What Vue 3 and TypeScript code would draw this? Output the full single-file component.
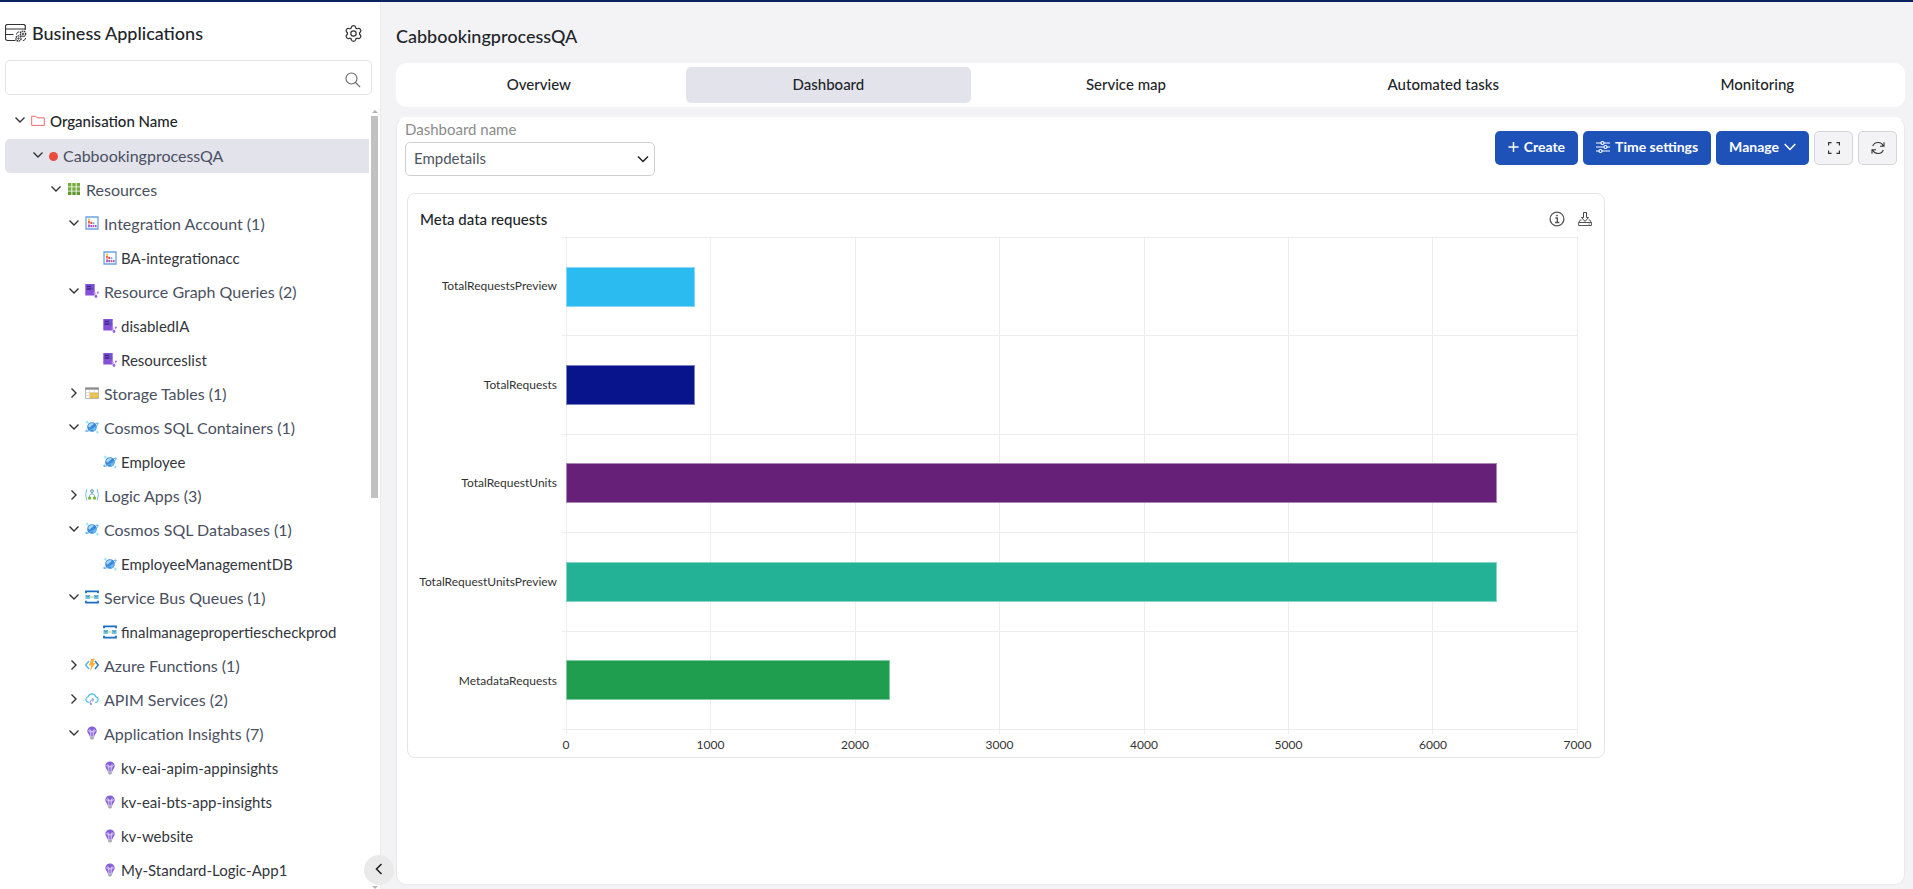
<script setup lang="ts">
import { ref } from 'vue'

interface TreeNode {
  label: string
  icon: string
  level: number
  kind: 'root' | 'app' | 'group' | 'leaf'
  open?: boolean
}

const group = (label: string, icon: string, open = true): TreeNode => ({ label, icon, level: 3, kind: 'group', open })
const leaf = (label: string, icon: string): TreeNode => ({ label, icon, level: 4, kind: 'leaf' })

const nodes: TreeNode[] = [
  { label: 'Organisation Name', icon: 'folder', level: 0, kind: 'root', open: true },
  { label: 'CabbookingprocessQA', icon: 'dot', level: 1, kind: 'app', open: true },
  { label: 'Resources', icon: 'resources', level: 2, kind: 'group', open: true },
  group('Integration Account (1)', 'integration'),
  leaf('BA-integrationacc', 'integration'),
  group('Resource Graph Queries (2)', 'query'),
  leaf('disabledIA', 'query'),
  leaf('Resourceslist', 'query'),
  group('Storage Tables (1)', 'table', false),
  group('Cosmos SQL Containers (1)', 'cosmos'),
  leaf('Employee', 'cosmos'),
  group('Logic Apps (3)', 'logic', false),
  group('Cosmos SQL Databases (1)', 'cosmos'),
  leaf('EmployeeManagementDB', 'cosmos'),
  group('Service Bus Queues (1)', 'bus'),
  leaf('finalmanagepropertiescheckprod', 'bus'),
  group('Azure Functions (1)', 'function', false),
  group('APIM Services (2)', 'apim', false),
  group('Application Insights (7)', 'insights'),
  leaf('kv-eai-apim-appinsights', 'insights'),
  leaf('kv-eai-bts-app-insights', 'insights'),
  leaf('kv-website', 'insights'),
  leaf('My-Standard-Logic-App1', 'insights'),
]

const tabs = ['Overview', 'Dashboard', 'Service map', 'Automated tasks', 'Monitoring']
const activeTab = ref('Dashboard')
const dashboard = ref('Empdetails')
const search = ref('')

const max = 7000
const ticks = [0, 1000, 2000, 3000, 4000, 5000, 6000, 7000]
const bars = [
  { name: 'TotalRequestsPreview', value: 890, fill: '#2cbbf0', edge: '#86d9f6' },
  { name: 'TotalRequests', value: 890, fill: '#08148c', edge: '#7a80c0' },
  { name: 'TotalRequestUnits', value: 6440, fill: '#662078', edge: '#ad84b7' },
  { name: 'TotalRequestUnitsPreview', value: 6440, fill: '#24b296', edge: '#86d4c5' },
  { name: 'MetadataRequests', value: 2240, fill: '#1f9e50', edge: '#85caa0' },
]
</script>

<template>
  <div class="page">
    <svg class="sprite" aria-hidden="true">
      <symbol id="i-folder" viewBox="0 0 14 14"><path d="M.7 11.4V2.3h4l1.3 1.5h7.3v7.6z" fill="none" stroke="#ee6a6e" /></symbol>
      <symbol id="i-dot" viewBox="0 0 9 14"><circle cx="4.5" cy="7.5" r="4.5" fill="#ea4a3e" /></symbol>
      <symbol id="i-resources" viewBox="0 0 14 14">
        <g fill="#74ad3d"><path d="M1 1h3.4v3.4H1zM5.3 1h3.4v3.4H5.3zM9.6 1H13v3.4H9.6z" /><path d="M1 5.3h3.4v3.4H1zM5.3 5.3h3.4v3.4H5.3zM9.6 5.3H13v3.4H9.6z" /></g>
        <path d="M1 9.6h3.4V13H1zM5.3 9.6h3.4V13H5.3zM9.6 9.6H13V13H9.6z" fill="#5f9630" />
      </symbol>
      <symbol id="i-integration" viewBox="0 0 14 14">
        <path d="M1 1h12v12H1z" fill="#fff" stroke="#6ba3e2" stroke-width="1.3" />
        <path d="M3 2.6h2v2.2H3z" fill="#fbc04e" /><path d="M3 5h2v2.4H3z" fill="#ef6a4a" /><path d="M3 8.6h2v2.6H3z" fill="#b45fc8" />
        <path d="M5.4 5.8h1.9V8H5.4z" fill="#e8453c" /><path d="M5.400 9h1.900v2.200H5.400z" fill="#8a55d8" /><path d="M7.800 6.400h1.600v1.800H7.800z" fill="#58a9ee" /><path d="M7.800 9h1.600v2.200H7.800z" fill="#e0568a" /><path d="M9.900 9h1.700v2.200H9.900z" fill="#9a5bd0" />
      </symbol>
      <symbol id="i-query" viewBox="0 0 14 14">
        <path d="M.3 0h9.400v11.500H.3z" fill="#8550d6" /><path d="M1.600 2.400h6.600M1.600 5h6.600" stroke="#41208a" stroke-width="1.500" /><path d="M6.500 2.400h1.100M6.500 5h1.100" stroke="#64d2f4" />
        <path d="M9.700 8.500 11 12.500l2-4" fill="none" stroke="#d5c2f4" /><circle cx="9.500" cy="9" r="1.100" fill="#b48af0" /><circle cx="12.900" cy="8.500" r="1.100" fill="#a774ee" /><circle cx="11" cy="12.500" r="1.400" fill="#9a62e6" />
      </symbol>
      <symbol id="i-table" viewBox="0 0 14 14">
        <path d="M.5 2h13v10.500H.5z" fill="#fff" stroke="#a3a3a3" stroke-width=".8" /><path d="M.2 1.500h13.600v2.200H.2z" fill="#8c8c8c" /><path d="M4.800 6.700h8.400v5.300H4.800z" fill="#efc02c" /><path d="M.5 6.500h13M.5 9.300h13M4.600 3.700v8.800M9 3.700v8.800" stroke="#d6cfb4" stroke-width=".7" />
      </symbol>
      <symbol id="i-cosmos" viewBox="0 0 14 14">
        <circle cx="7" cy="7" r="4.800" fill="#3a86d8" /><path d="M3.200 5.400c1-2.200 3.700-3.200 5.600-2C8 5.600 6 5 5.300 7.200 4.600 7.800 3 7 3.200 5.400z" fill="#a5daf9" /><path d="M7.200 9c1.300-1.300 3.200-1.600 4.200-1.500-.3 2-1.500 3.400-3 4z" fill="#6bb8ef" />
        <path d="M2.400 9.800c-2.600.9-2 2.600 1.400 1M10.800 3.600c3-1.300 3.200.2.300 2.700C9.200 8 6.500 9.600 4 10.600" fill="none" stroke="#5fb2ea" stroke-width="1.100" /><path d="M2.200.6v3M.7 2.100h3M12.300 10.600v3M10.800 12.100h3" stroke="#86e2f6" stroke-width=".9" />
      </symbol>
      <symbol id="i-logic" viewBox="0 0 14 14">
        <path d="M2 1.200C.9 1.200 1.600 6.300.4 6.800c1.200.5.5 5.600 1.600 5.600M12 1.200c1.100 0 .4 5.100 1.600 5.600-1.200.5-.5 5.600-1.600 5.600" fill="none" stroke="#76b6df" /><path d="M7 4.500v1.800M4.500 9V7.200L7 5.700l2.500 1.500V9" fill="none" stroke="#7bb3c9" />
        <circle cx="7" cy="3.100" r="1.400" fill="none" stroke="#478ec6" /><path d="M3.200 8.700h2.700v2.700H3.200zM8.200 8.700h2.700v2.700H8.200z" fill="#6eb52c" />
      </symbol>
      <symbol id="i-bus" viewBox="0 0 14 14">
        <path d="M1 3.300V1.300h12v2M1 10.700v2h12v-2" fill="none" stroke="#1b6cc4" stroke-width="1.800" /><path d="M.4 5h4.700v4H.4zM8.900 5h4.700v4H8.900z" fill="#74c3df" /><path d="m1 5.500 1.800 1.400 1.700-1.400M9.500 5.500l1.800 1.400L13 5.500" fill="none" stroke="#2f7fb8" stroke-width=".8" /><path d="M5.400 7h3.200" stroke="#a5c95a" />
      </symbol>
      <symbol id="i-function" viewBox="0 0 14 14">
        <path d="M4 3 .8 7 4 11" fill="none" stroke="#58b7e8" stroke-width="1.500" /><path d="m10 3 3.200 4L10 11" fill="none" stroke="#2f7cc8" stroke-width="1.500" /><path d="M6.500.8h3.300L8 5h2.600L5 13l1.400-5.400H3.800z" fill="#fbb034" />
      </symbol>
      <symbol id="i-apim" viewBox="0 0 14 14">
        <path d="M4 10.300H3.300A2.700 2.700 0 0 1 3 5a4 4 0 0 1 7.800-.2 2.800 2.800 0 0 1 0 5.500H10" fill="none" stroke="#4cc3ec" stroke-width="1.200" /><path d="M5.300 11.800c-.8-2.600.7-4.300 3.100-4.100M7 6l1.900 1.700L7 9.500" fill="none" stroke="#8b8fc4" /><circle cx="6" cy="12" r="1.100" fill="#8b8fc4" />
      </symbol>
      <symbol id="i-insights" viewBox="0 0 14 14">
        <path d="M7 .4a4.600 4.600 0 0 1 4.700 4.500c0 2.400-2.100 3-2.400 5.500H4.700C4.400 7.900 2.300 7.300 2.300 4.900A4.600 4.600 0 0 1 7 .4z" fill="#8661d5" /><path d="M5.800 10V5.800H4.600a1 1 0 1 1 1.200-1v1h2.400v-1a1 1 0 1 1 1.200 1H8.200V10" fill="none" stroke="#e6d9fb" stroke-width=".9" /><path d="M5.200 11.100h3.600v1.200L8 13.600H6l-.8-1.300z" fill="#aaa9b5" />
      </symbol>
    </svg>

    <aside class="sidebar">
      <header class="side-head">
        <svg class="brand" viewBox="0 0 22 18" fill="none" stroke="#333" aria-hidden="true">
          <path d="M10.500 16.500h-8a2 2 0 0 1-2-2v-12a2 2 0 0 1 2-2h16a1.800 1.800 0 0 1 1.800 1.800V6M.5 5h19.800M.5 10.500h8" stroke-width="1.200" />
          <circle cx="18" cy="9.800" r="2.700" stroke-dasharray="1.600 .6" stroke-width="1.300" /><circle cx="18" cy="9.800" r=".8" />
          <circle cx="13.500" cy="14.500" r="2.600" stroke-dasharray="1.600 .6" stroke-width="1.300" /><circle cx="13.500" cy="14.500" r=".7" /><path d="M11.500 10.500c.3-1.800 1-2.600 2.700-2.600M20.500 14c-.2 1.600-1 2.400-2.600 2.600" />
        </svg>
        <h2>Business Applications</h2>
        <button class="plain" type="button" aria-label="Settings">
          <svg width="17" height="17" viewBox="1 0 14 14" fill="none" stroke="#333">
            <path d="M6.300 1.700C6.500.9 7 .6 8 .6s1.500.3 1.700 1.100l.2.800 1.100.6.800-.2c.9-.3 1.400 0 1.900.8s.5 1.500-.1 2.100l-.6.600v1.200l.6.600c.6.600.600 1.300.1 2.100s-1 1.100-1.900.8l-.8-.2-1.100.6-.2.800c-.2.800-.7 1.100-1.700 1.100s-1.500-.3-1.700-1.100l-.2-.8-1.100-.6-.8.200c-.9.300-1.400 0-1.900-.8s-.5-1.500.1-2.100l.6-.6V6.400l-.6-.6c-.6-.6-.600-1.300-.1-2.100s1-1.100 1.900-.8l.8.200 1.100-.6z" />
            <circle cx="8" cy="7" r="2.200" />
          </svg>
        </button>
      </header>

      <div class="search">
        <input v-model="search" type="text" aria-label="Search applications" />
        <svg width="16" height="16" viewBox="0 0 16 16" fill="none" stroke="#666" stroke-width="1.100" aria-hidden="true"><circle cx="6.500" cy="6.500" r="5.500" /><path d="m10.500 10.500 4.700 4.700" /></svg>
      </div>

      <div class="tree-area">
        <ul class="tree">
          <li v-for="node in nodes" :key="node.label" :class="['node', node.kind, 'level-' + node.level]">
            <svg v-if="node.kind !== 'leaf'" :class="['chev', { closed: !node.open }]" viewBox="0 0 10 10" aria-hidden="true"><path d="m.5 2.500 4.500 4.500 4.500-4.500" fill="none" stroke="#333" stroke-width="1.400" /></svg>
            <svg :class="['ico', node.icon]" aria-hidden="true"><use :href="'#i-' + node.icon" /></svg>
            <span>{{ node.label }}</span>
          </li>
        </ul>
        <div class="scroll" aria-hidden="true"><i class="up"></i><i class="thumb"></i><i class="down"></i></div>
      </div>
      <button class="collapse" type="button" aria-label="Collapse sidebar">
        <svg width="12" height="12" viewBox="0 0 12 12"><path d="M8.500 1 3.500 6l5 5" fill="none" stroke="#222" stroke-width="1.600" /></svg>
      </button>
    </aside>

    <main class="main">
      <h1>CabbookingprocessQA</h1>
      <nav class="tabs">
        <button v-for="tab in tabs" :key="tab" type="button" :class="{ active: tab === activeTab }" @click="activeTab = tab">{{ tab }}</button>
      </nav>

      <section class="panel">
        <div class="toolbar">
          <div class="field">
            <label for="dashboard">Dashboard name</label>
            <div class="select">
              <select id="dashboard" v-model="dashboard"><option>Empdetails</option></select>
              <svg width="12" height="12" viewBox="0 0 12 12" aria-hidden="true"><path d="m1 3.500 5 5 5-5" fill="none" stroke="#222" stroke-width="1.500" /></svg>
            </div>
          </div>
          <div class="actions">
            <button class="primary" type="button">
              <svg width="11" height="12" viewBox="0 0 11 12" stroke="#fff" stroke-width="1.500"><path d="M5.500 1v10M.5 6h10" /></svg>Create
            </button>
            <button class="primary" type="button">
              <svg width="14" height="14" viewBox="0 0 14 14" fill="none" stroke="#fff" stroke-width="1.200"><path d="M0 3h5M8 3h6M0 7h8M11 7h3M0 11h3M6 11h8" /><circle cx="6.500" cy="3" r="1.500" /><circle cx="9.500" cy="7" r="1.500" /><circle cx="4.500" cy="11" r="1.500" /></svg>Time settings
            </button>
            <button class="primary" type="button">
              Manage<svg width="12" height="12" viewBox="0 0 12 12"><path d="m.7 3 5.300 5.500L11.300 3" fill="none" stroke="#fff" stroke-width="1.500" /></svg>
            </button>
            <button class="square" type="button" aria-label="Full screen">
              <svg width="12" height="12" viewBox="0 0 12 12"><path d="M.6 3.600v-3h3M8.400.6h3v3M11.400 8.400v3h-3M3.600 11.400h-3v-3" fill="none" stroke="#333" stroke-width="1.200" /></svg>
            </button>
            <button class="square" type="button" aria-label="Refresh">
              <svg width="14" height="14" viewBox="0 0 14 14"><path d="M12.300 5.200A5.700 5.700 0 0 0 1.700 5M1.700 8.800A5.700 5.700 0 0 0 12.300 9M13 1.200v4H9M1 12.800v-4h4" fill="none" stroke="#333" stroke-width="1.100" /></svg>
            </button>
          </div>
        </div>

        <div class="widgets">
          <article class="card">
            <header class="card-head">
              <h3>Meta data requests</h3>
              <button class="plain" type="button" aria-label="Information">
                <svg width="16" height="16" viewBox="0 0 16 16" fill="none" stroke="#555"><circle cx="8" cy="8" r="6.900" stroke-width="1.300" /><path d="M6.300 7h2v4.500M6 11.500h4.300" stroke-width="1.400" /><circle cx="8" cy="4.500" r=".6" stroke-width="1" /></svg>
              </button>
              <button class="plain" type="button" aria-label="Download">
                <svg width="14" height="16" viewBox="0 0 14 16" fill="none" stroke="#444"><path d="M5.500 1.500h3v5h2L7 10.500l-3.500-4h2z" /><path d="M3.500 9H2.200L.6 11.500v3h12.800v-3L11.800 9h-1.300M.6 11.500h12.800M10.500 13h1.200" stroke-width=".9" /></svg>
              </button>
            </header>
            <div class="chart">
              <div class="names"><span v-for="bar in bars" :key="bar.name">{{ bar.name }}</span></div>
              <div class="plot">
                <div class="columns"><i v-for="n in 7" :key="n"></i></div>
                <div class="rows">
                  <div v-for="bar in bars" :key="bar.name" class="row">
                    <div class="bar" :style="{ width: (bar.value / max) * 100 + '%', background: bar.fill, borderColor: bar.edge }"></div>
                  </div>
                </div>
              </div>
              <div class="axis"><span v-for="t in ticks" :key="t">{{ t }}</span></div>
            </div>
          </article>
        </div>
      </section>
    </main>
  </div>
</template>

<style>
body {
  margin: 0;
}
</style>

<style scoped>
.page,
.page * {
  box-sizing: border-box;
}
.page {
  display: flex;
  height: 100vh;
  overflow: hidden;
  border-top: 2px solid #0b2260;
  background: #f3f3f6;
  color: #212529;
  font: 400 15px/20px Lato, "Open Sans", sans-serif;
}
.sprite {
  position: absolute;
  width: 0;
  height: 0;
}
h1,
h2,
h3 {
  margin: 0;
  font-weight: 500;
}
button,
input,
select {
  font: inherit;
  color: inherit;
}
button {
  cursor: pointer;
}
.plain {
  display: flex;
  padding: 0;
  border: 0;
  background: none;
}

.sidebar {
  position: relative;
  display: flex;
  flex-direction: column;
  flex: 0 0 380px;
  background: #fff;
  box-shadow: 1px 0 0 #ebebee;
}
.side-head {
  display: flex;
  align-items: center;
  gap: 5px;
  height: 58px;
  padding: 4px 18px 0 5px;
}
.side-head h2 {
  flex: 1;
  font-size: 18px;
  line-height: 24px;
}
.brand {
  width: 22px;
  height: 18px;
}
.search {
  display: flex;
  align-items: center;
  flex: none;
  height: 35px;
  margin: 0 8px 0 5px;
  padding-right: 10px;
  border: 1px solid #e3e3e5;
  border-radius: 5px;
}
.search input {
  flex: 1;
  min-width: 0;
  height: 100%;
  padding: 0 10px;
  border: 0;
  outline: 0;
  background: none;
}
.search svg {
  margin-top: 4px;
}
.tree-area {
  display: flex;
  flex: 1;
  min-height: 0;
  margin-top: 9px;
}
.tree {
  flex: 1;
  margin: 0;
  padding: 0 2px 0 5px;
  overflow: hidden;
  list-style: none;
}
.node {
  display: flex;
  align-items: center;
  gap: 5px;
  height: 34px;
  color: #33363c;
  white-space: nowrap;
}
.level-0 { height: 35px; padding-left: 10px; color: #212529; font-weight: 500; }
.level-1 { padding-left: 28px; }
.level-2 { padding-left: 46px; }
.level-3 { padding-left: 64px; }
.level-4 { padding-left: 98px; }
.leaf {
  gap: 4px;
}
.root {
  padding-bottom: 2px;
}
.app {
  border-radius: 5px 0 0 5px;
  background: #e2e3eb;
}
.group,
.app {
  color: #4a5061;
  font-size: 16px;
}
.chev {
  width: 10px;
  height: 10px;
  margin: 0 1px 2px 0;
}
.chev.closed {
  transform: rotate(-90deg);
}
.ico {
  width: 14px;
  height: 14px;
}
.ico.dot {
  width: 9px;
}
.group .ico {
  margin-bottom: 3px;
}
.scroll {
  display: flex;
  flex-direction: column;
  align-items: center;
  width: 9px;
  padding: 6px 2px 0 0;
}
.scroll .up {
  border: 3px solid transparent;
  border-top: 0;
  border-bottom-color: #b5b5b5;
}
.thumb {
  flex: 0 0 49%;
  width: 7px;
  margin: 3px 0 auto;
  background: #c1c1c1;
}
.scroll .down {
  border: 3px solid transparent;
  border-bottom: 0;
  border-top-color: #b5b5b5;
}
.collapse {
  position: absolute;
  right: -14px;
  bottom: 4px;
  display: grid;
  place-items: center;
  width: 30px;
  height: 30px;
  padding: 0 0 2px;
  border: 0;
  border-radius: 50%;
  background: #eaeaeb;
}

.main {
  display: flex;
  flex-direction: column;
  flex: 1;
  min-width: 0;
  padding: 22px 8px 4px 16px;
}
h1 {
  font-size: 18px;
  line-height: 24px;
}
.tabs {
  display: flex;
  gap: 8px;
  margin-top: 15px;
  padding: 4px;
  border-radius: 10px;
  background: #fff;
}
.tabs button {
  flex: 1 1 auto;
  height: 36px;
  padding: 0 0 2px;
  border: 0;
  border-radius: 5px;
  background: none;
  font-weight: 500;
}
.tabs .active {
  background: #e3e3eb;
}
.panel {
  flex: 1;
  min-height: 0;
  margin-top: 10px;
  border: 1px solid #e9e9ec;
  border-top-color: #fff;
  border-radius: 10px;
  background: #fff;
}
.toolbar {
  display: flex;
  justify-content: space-between;
  align-items: flex-start;
  padding: 2px 7px 0 8px;
}
.field label {
  display: block;
  color: #8b8b8b;
  line-height: 18px;
}
.select {
  display: grid;
  align-items: center;
  width: 250px;
  height: 34px;
  margin-top: 4px;
}
.select select,
.select svg {
  grid-area: 1 / 1;
}
.select svg {
  justify-self: end;
  margin-right: 6px;
  pointer-events: none;
}
.select select {
  width: 100%;
  height: 100%;
  padding: 0 8px 2px;
  border: 1px solid #cfcfd2;
  border-radius: 5px;
  background: #fff;
  color: #50555f;
  appearance: none;
}
.actions {
  display: flex;
  gap: 5px;
  padding-top: 11px;
}
.actions button {
  display: flex;
  align-items: center;
  justify-content: center;
  height: 34px;
  border-radius: 5px;
}
.actions .primary {
  gap: 5px;
  padding: 0 13px 2px;
  border: 0;
  background: #1e52b9;
  color: #fff;
  font-size: 14px;
  font-weight: 700;
}
.square {
  width: 39px;
  padding: 0;
  border: 1px solid #d5d5d8;
  background: #f3f3f6;
}
.widgets {
  margin: 17px 0 0 10px;
}
.card {
  width: 80%;
  border: 1px solid #e5e5e8;
  border-radius: 8px;
}
.card-head {
  display: flex;
  align-items: center;
  gap: 13px;
  height: 43px;
  padding: 6px 12px 0;
}
.card-head h3 {
  flex: 1;
  font-size: 15px;
}
.chart {
  display: grid;
  grid-template-columns: 158px 1fr;
  padding-right: 26px;
  font-size: 12px;
  line-height: 14px;
}
.names {
  display: grid;
  grid-template-rows: repeat(5, 1fr);
  align-items: center;
  justify-items: end;
  height: 493px;
  padding-right: 9px;
  color: #333;
}
.plot {
  display: grid;
}
.columns,
.rows {
  grid-area: 1 / 1;
}
.columns {
  display: flex;
  margin-bottom: -4px;
}
.columns i {
  flex: 1;
  border-left: 1px solid #ededed;
}
.columns i:last-child {
  border-right: 1px solid #ededed;
}
.rows {
  display: grid;
  grid-template-rows: repeat(5, 1fr);
  margin-left: -4px;
  border-bottom: 1px solid #ededed;
}
.row {
  display: flex;
  align-items: center;
  padding-left: 4px;
  border-top: 1px solid #ededed;
}
.bar {
  height: 40px;
  border: 1px solid;
}
.axis {
  display: flex;
  grid-column: 2;
  justify-content: space-between;
  padding: 8px 0 5px;
  color: #333;
}
.axis span {
  display: flex;
  justify-content: center;
  width: 0;
}
</style>
